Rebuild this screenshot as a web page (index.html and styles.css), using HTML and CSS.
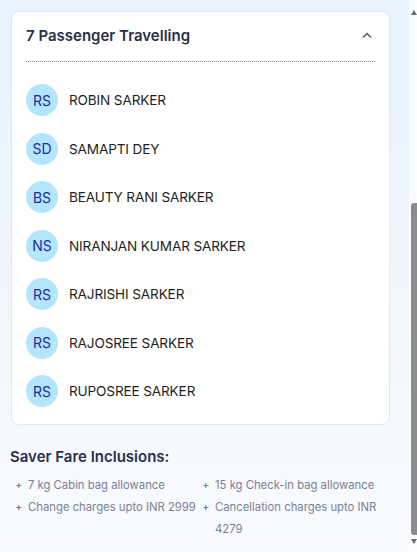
FILE: index.html
```html
<!DOCTYPE html>
<html>
<head>
<meta charset="utf-8">
<link rel="stylesheet" href="styles.css">
</head>
<body>
<div class="page">
  <main class="content">
    <section class="card">
      <header class="card-head">
        <h2 class="card-title">7 Passenger Travelling</h2>
        <svg class="chev" width="12" height="8" viewBox="0 0 12 8"><path d="M2 6.5 L6 2.5 L10 6.5" fill="none" stroke="#555" stroke-width="1.4"/></svg>
      </header>
      <div class="divider"></div>
      <ul class="pax">
        <li class="pax-row"><span class="avatar">RS</span><span class="name">ROBIN SARKER</span></li>
        <li class="pax-row"><span class="avatar">SD</span><span class="name">SAMAPTI DEY</span></li>
        <li class="pax-row"><span class="avatar">BS</span><span class="name">BEAUTY RANI SARKER</span></li>
        <li class="pax-row"><span class="avatar">NS</span><span class="name">NIRANJAN KUMAR SARKER</span></li>
        <li class="pax-row"><span class="avatar">RS</span><span class="name">RAJRISHI SARKER</span></li>
        <li class="pax-row"><span class="avatar">RS</span><span class="name">RAJOSREE SARKER</span></li>
        <li class="pax-row"><span class="avatar">RS</span><span class="name">RUPOSREE SARKER</span></li>
      </ul>
    </section>
    <section class="incl">
      <h3 class="incl-title">Saver Fare Inclusions:</h3>
      <ul class="incl-list">
        <li><span class="plus">+</span><span>7 kg Cabin bag allowance</span></li>
        <li><span class="plus">+</span><span>15 kg Check-in bag allowance</span></li>
        <li><span class="plus">+</span><span>Change charges upto INR 2999</span></li>
        <li><span class="plus">+</span><span>Cancellation charges upto INR 4279</span></li>
      </ul>
    </section>
  </main>
  <aside class="sbar">
    <span class="sb-up"></span>
    <span class="sb-gap"></span>
    <span class="sb-thumb"></span>
    <span class="sb-down"></span>
  </aside>
</div>
</body>
</html>
```

FILE: styles.css
```css
* { box-sizing: border-box; }
html, body { margin: 0; padding: 0; }
body {
  width: 417px;
  height: 552px;
  overflow: hidden;
  font-family: "Inter", "Noto Sans", sans-serif;
  background: linear-gradient(180deg, #e8f3fd 0%, #eef5fd 40%, #f5f8fd 75%, #f9fbfe 100%);
}
.page {
  display: flex;
  height: 552px;
}
.content {
  flex: 1;
  padding: 11px 19px 0 11px;
}
.card {
  background: #fff;
  border: 1px solid #e3e7ee;
  border-radius: 8px;
  padding: 0 14px 8px 14px;
}
.card-head {
  display: flex;
  align-items: center;
  justify-content: space-between;
  height: 46px;
}
.card-title {
  margin: 0;
  font-size: 15px;
  font-weight: 600;
  color: #2a2f4a;
}
.chev { margin-right: 2px; }
.divider {
  border-top: 1px dotted #8a8f99;
  margin-top: 3px;
  margin-bottom: 14px;
}
.pax {
  list-style: none;
  margin: 0;
  padding: 0;
}
.pax-row {
  display: flex;
  align-items: center;
  gap: 11px;
  height: 48.5px;
}
.avatar {
  width: 32px;
  height: 32px;
  border-radius: 50%;
  background: #b3e5fc;
  color: #1a2da6;
  font-size: 14px;
  display: flex;
  align-items: center;
  justify-content: center;
}
.name {
  font-size: 13.6px;
  letter-spacing: -0.15px;
  color: #1f1f24;
}
.incl {
  padding: 22px 0 0 0;
}
.incl-title {
  margin: 0 0 8px -1px;
  font-size: 15px;
  font-weight: 600;
  color: #2a2f4a;
}
.incl-list {
  list-style: none;
  margin: 0;
  padding: 0 0 0 4px;
  display: grid;
  grid-template-columns: 187px 1fr;
  font-size: 11.3px;
  line-height: 22px;
  color: #7c8096;
}
.incl-list li { display: flex; }
.plus { width: 13px; flex: none; color: #6b6f80; }
.sbar {
  width: 8px;
  display: flex;
  flex-direction: column;
  align-items: flex-end;
  background: #fbfcfe;
}
.sb-up {
  margin-top: 10px;
  width: 0; height: 0;
  border-left: 3px solid transparent;
  border-right: 3px solid transparent;
  border-bottom: 5px solid #6b6b6b;
}
.sb-gap { height: 188px; }
.sb-thumb {
  width: 6px;
  height: 332px;
  background: #8c8c8c;
  border-radius: 3px 0 0 3px;
}
.sb-down {
  margin-top: 4px;
  width: 0; height: 0;
  border-left: 3px solid transparent;
  border-right: 3px solid transparent;
  border-top: 5px solid #6b6b6b;
}
```
